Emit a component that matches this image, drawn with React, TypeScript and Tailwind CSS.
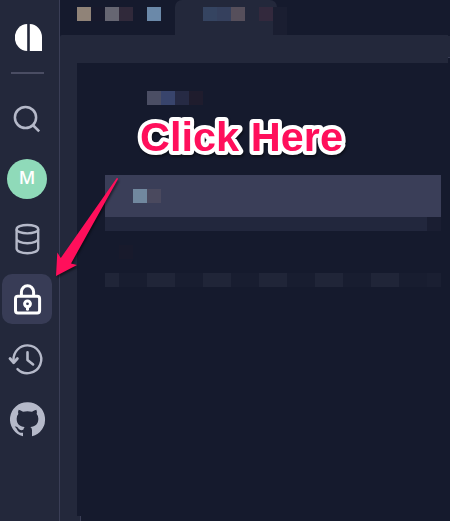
import type { ReactNode } from "react";

type Cell = [width: string, color: string];

function Cells({ cells, className = "" }: { cells: Cell[]; className?: string }) {
  return (
    <div className={`flex h-3.5 shrink-0 ${className}`}>
      {cells.map(([w, c], i) => (
        <div key={i} className={`h-full shrink-0 ${w} ${c}`} />
      ))}
    </div>
  );
}

function NavItem({ active, children }: { active?: boolean; children: ReactNode }) {
  return (
    <button
      className={`flex h-[50px] w-[50px] shrink-0 items-center justify-center rounded-[10px] ${
        active ? "bg-[#383c56] text-white" : "text-[#b5b9c9]"
      }`}
    >
      {children}
    </button>
  );
}

function Sidebar() {
  return (
    <nav className="flex h-full w-[60px] shrink-0 flex-col border-r border-[#3a3e56] bg-[#23283b] pl-0.5">
      <svg className="mt-6 ml-[13px] h-[27px] w-[27px] shrink-0" viewBox="0 0 27 27" fill="white">
        <path d="M12.2 0A12.4 13.5 0 0 0 12.2 27Z" />
        <path d="M14.8 0A12.4 13.3 0 0 1 27 13.3V27H14.8Z" />
      </svg>
      <div className="mt-[21px] ml-[9px] h-0.5 w-[33px] shrink-0 bg-[#4a4d63]" />
      <div className="mt-5 flex flex-col gap-2.5">
        <NavItem>
          <svg className="h-[50px] w-[50px]" viewBox="0 0 50 50" fill="none" stroke="currentColor" strokeWidth="2.5">
            <circle cx="23.5" cy="23.5" r="10.6" />
            <path d="m30.8 31 6.4 6.4" />
          </svg>
        </NavItem>
        <NavItem>
          <span className="flex h-10 w-10 items-center justify-center rounded-full bg-[#8fdab9] pb-[3px] font-['Open_Sans',sans-serif] text-[18px] font-semibold text-white">
            M
          </span>
        </NavItem>
        <NavItem>
          <svg className="h-[50px] w-[50px]" viewBox="0 0 50 50" fill="none" stroke="currentColor" strokeWidth="2.4">
            <ellipse cx="25.4" cy="15.2" rx="10.8" ry="4.2" />
            <path d="M14.6 15.2v19.2c0 2.8 4.8 4.8 10.8 4.8s10.8-2 10.8-4.8V15.2M14.6 24.5c0 2.8 4.8 4.7 10.8 4.7s10.8-1.9 10.8-4.7" />
          </svg>
        </NavItem>
        <NavItem active>
          <svg className="h-[50px] w-[50px]" viewBox="0 0 50 50" fill="none" stroke="currentColor" strokeWidth="3" strokeLinecap="round">
            <rect x="13.5" y="22.3" width="24.1" height="16.7" rx="2.4" />
            <path d="M19.4 21.5v-3.6a6.1 6.1 0 0 1 12.2 0v3.6" />
            <circle cx="25.5" cy="29.8" r="2.9" strokeWidth="3" />
            <path d="M25.5 32.7v2.6" strokeWidth="3" />
          </svg>
        </NavItem>
        <NavItem>
          <svg className="h-[50px] w-[50px]" viewBox="0 0 50 50" fill="none" stroke="currentColor" strokeWidth="2.4" strokeLinecap="round" strokeLinejoin="round">
            <path d="M11.5 28.2V25.7C11.5 17.5 17.8 11.4 25.5 11.4a13.9 13.9 0 1 1-10 23.7" />
            <path d="m8 24.5 3.6 4.2 3.8-4.2" strokeWidth="2.8" />
            <path d="M25.5 18.4v7.5l5.6 4.5" strokeWidth="2.6" />
          </svg>
        </NavItem>
        <NavItem>
          <svg className="h-[50px] w-[50px]" viewBox="6 27 150 150" fill="currentColor">
            <path d="M82 52A51.5 51.5 0 0 0 69 153.500V143C57 145 53 137 50 131Q47 127 44 125Q51 123 56 131Q61 138 70 134Q71 129 74 126C59 124 50 117 50 101Q50 92 55 87Q53 80 56 74Q62 75 69 80Q82 77 96 80Q103 75 109 74Q112 80 110 87Q115 92 115 101C115 117 106 124 91 126Q96 129 96 136V153.500A51.500 51.500 0 0 0 82 52Z" />
          </svg>
        </NavItem>
      </div>
    </nav>
  );
}

const L = "bg-[#202538]";
const D = "bg-[#181d30]";
const NONE = "bg-transparent";

function TabBar() {
  return (
    <div className="flex h-[35px] shrink-0">
      <div className="w-[115px] pt-[7px] pl-[17px]">
        <Cells
          cells={[
            ["w-3.5", "bg-[#908378]"],
            ["w-3.5", "bg-[#17192c]"],
            ["w-3.5", "bg-[#666672]"],
            ["w-3.5", "bg-[#30293a]"],
            ["w-3.5", NONE],
            ["w-3.5", "bg-[#6b89a9]"],
          ]}
        />
      </div>
      <div className="flex h-full w-[112px] flex-col">
        <div className="h-[7px] w-[102px] rounded-t-[9px] bg-[#23283b]" />
        <div className="flex flex-1">
          <div className="w-[98px] bg-[#23283b] pl-7">
            <Cells
              cells={[
                ["w-3.5", "bg-[#354461]"],
                ["w-3.5", "bg-[#35405d]"],
                ["w-3.5", "bg-[#564f5b]"],
                ["w-3.5", NONE],
                ["w-3.5", "bg-[#33293d]"],
              ]}
            />
          </div>
          <div className="w-3.5 bg-[#1a1e31]" />
        </div>
      </div>
    </div>
  );
}

function Workspace() {
  return (
    <section className="h-[453px] shrink-0 bg-[#151a2d] pt-7 pl-7">
      <Cells
        className="ml-[42px]"
        cells={[
          ["w-3.5", "bg-[#4b4e64]"],
          ["w-3.5", "bg-[#38446c]"],
          ["w-3.5", "bg-[#262a44]"],
          ["w-3.5", "bg-[#1f1c2d]"],
        ]}
      />
      <div className="mt-[70px] h-[42px] w-[336px] bg-[#3a3e58] pt-3.5 pl-7">
        <Cells cells={[["w-3.5", "bg-[#71889f]"], ["w-3.5", "bg-[#4a495e]"]]} />
      </div>
      <Cells cells={[["w-[322px]", "bg-[#22273d]"], ["w-3.5", "bg-[#1a1e32]"]]} />
      <Cells className="mt-3.5 ml-3.5" cells={[["w-3.5", "bg-[#181a2c]"]]} />
      <Cells
        className="mt-3.5"
        cells={[
          ["w-3.5", L],
          ["w-7", D],
          ["w-7", L],
          ["w-7", D],
          ["w-7", L],
          ["w-7", D],
          ["w-7", L],
          ["w-7", D],
          ["w-7", L],
          ["w-7", D],
          ["w-7", L],
          ["w-7", D],
          ["w-3.5", "bg-[#1a1f32]"],
        ]}
      />
    </section>
  );
}

function Callout() {
  return (
    <svg className="pointer-events-none absolute inset-0 h-full w-full" viewBox="0 0 450 521">
      <text
        x="140"
        y="151"
        textLength="203"
        className="fill-[#ff0f5b] stroke-white stroke-[8px] font-['Liberation_Sans',Arial,sans-serif] text-[41.5px] font-bold [filter:drop-shadow(1px_2px_1px_rgba(0,0,0,0.45))] [paint-order:stroke_fill] [stroke-linejoin:round]"
      >
        Click Here
      </text>
      <path
        className="fill-[#ff0f5b] [filter:drop-shadow(1px_2px_1px_rgba(0,0,0,0.5))]"
        d="M116.6 178.3Q117.7 177.6 118 179L71 263.5 77 265 56 276 57.3 252.5 60.8 258Z"
      />
    </svg>
  );
}

export default function App() {
  return (
    <div className="relative flex h-[521px] w-[450px] overflow-hidden bg-[#151a2d]">
      <Sidebar />
      <main className="flex min-w-0 flex-1 flex-col">
        <TabBar />
        <div className="flex h-7 shrink-0">
          <div className="w-[388px] rounded-tl-[2px] bg-[#23283b]" />
          <div className="mt-px h-[22px] w-0.5 border-b border-[#3a3e56] bg-[#23283b]" />
        </div>
        <div className="flex flex-1">
          <div className="w-[17px] shrink-0 bg-[#23283b]" />
          <div className="flex flex-1 flex-col">
            <Workspace />
            <div className="h-[5px] w-1 border-r border-[#3a3e56] bg-[#23283b]" />
          </div>
        </div>
      </main>
      <Callout />
    </div>
  );
}
